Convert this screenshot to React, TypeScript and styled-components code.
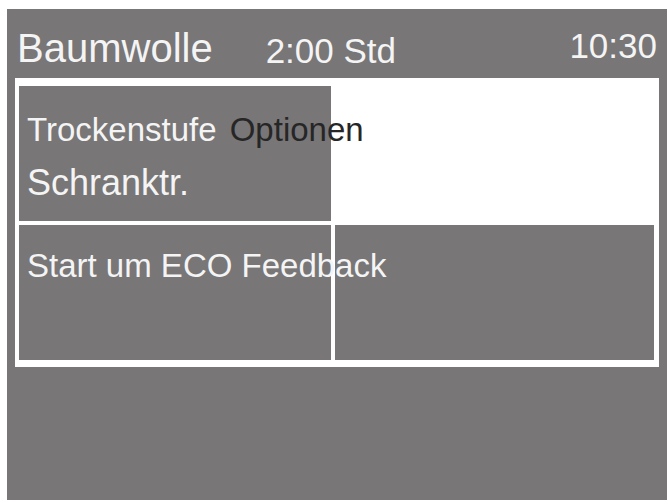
import React from "react";
import styled, { createGlobalStyle } from "styled-components";

const GlobalStyle = createGlobalStyle`
  html, body {
    margin: 0;
    padding: 0;
    background: #ffffff;
  }
  body {
    font-family: "Liberation Sans", Arial, sans-serif;
  }
`;

const Screen = styled.div`
  margin: 9px 0 0 7px;
  width: 660px;
  height: 491px;
  background: #787677;
  display: flex;
  flex-direction: column;
`;

const Header = styled.header`
  height: 69px;
  box-sizing: border-box;
  padding: 19px 10px 0 10px;
  display: flex;
  align-items: flex-start;
  color: #f4f4f4;
`;

const Title = styled.span`
  font-size: 40px;
  line-height: 1;
`;

const Info = styled.span<{ $offset?: number }>`
  font-size: 35px;
  line-height: 1;
  margin-top: ${({ $offset }) => $offset ?? 0}px;
`;

const Duration = styled(Info)`
  margin-left: 53px;
`;

const Clock = styled(Info)`
  margin-left: auto;
`;

const Frame = styled.section`
  margin: 0 8px;
  height: 289px;
  box-sizing: border-box;
  padding: 8px 5px 7px 4px;
  background: #ffffff;
  display: grid;
  grid-template-columns: 312px 319px;
  grid-template-rows: 135px 135px;
  column-gap: 4px;
  row-gap: 4px;
`;

const Cell = styled.div<{ $filled?: boolean; $top?: number }>`
  background: ${({ $filled }) => ($filled ? "#787677" : "transparent")};
  box-sizing: border-box;
  padding: ${({ $top }) => $top ?? 0}px 0 0 8px;
  overflow: visible;
  white-space: nowrap;
`;

const Label = styled.div<{ $size: number; $gap?: number }>`
  position: relative;
  z-index: 1;
  font-size: ${({ $size }) => $size}px;
  line-height: 1;
  color: #f4f4f4;
  margin-top: ${({ $gap }) => $gap ?? 0}px;
`;

const Dark = styled.span`
  color: #262626;
  margin-left: 4px;
`;

export default function App() {
  return (
    <>
      <GlobalStyle />
      <Screen>
        <Header>
          <Title>Baumwolle</Title>
          <Duration $offset={5}>2:00 Std</Duration>
          <Clock>10:30</Clock>
        </Header>
        <Frame>
          <Cell $filled $top={27}>
            <Label $size={33}>
              Trockenstufe<Dark> Optionen</Dark>
            </Label>
            <Label $size={36} $gap={19}>
              Schranktr.
            </Label>
          </Cell>
          <Cell />
          <Cell $filled $top={24}>
            <Label $size={33}>Start um ECO Feedback</Label>
          </Cell>
          <Cell $filled />
        </Frame>
      </Screen>
    </>
  );
}
